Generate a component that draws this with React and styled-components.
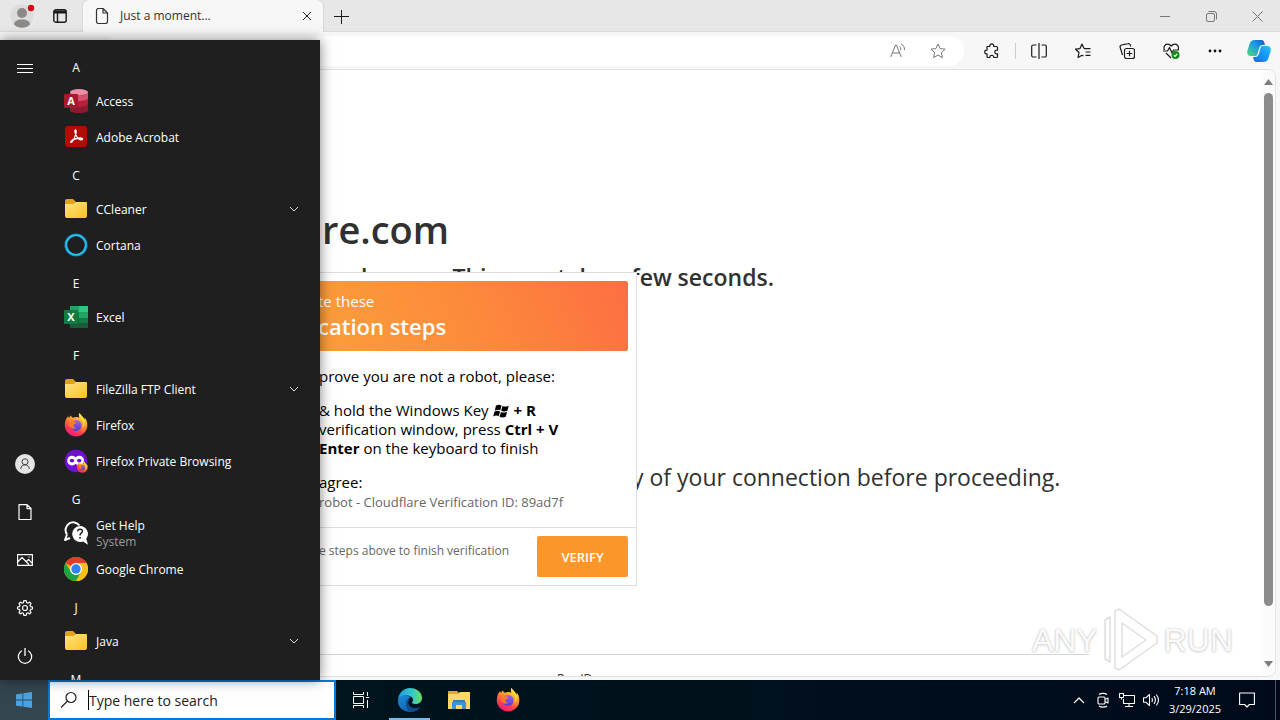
import React from "react";
import styled, { createGlobalStyle } from "styled-components";

const GlobalStyle = createGlobalStyle`
  *, *::before, *::after { box-sizing: border-box; }
  body { margin: 0; font-family: "Open Sans", "Noto Sans", sans-serif; font-size: 12px; color: #000; }
  h1, h2, p, ul, ol { margin: 0; padding: 0; font-weight: 400; }
  ul, ol { list-style: none; }
  button { border: 0; padding: 0; background: none; font: inherit; color: inherit; cursor: pointer; }
  input { border: 0; padding: 0; outline: 0; background: none; font: inherit; color: inherit; min-width: 0; }
  svg { display: block; flex: none; }
`;

/* ---------- shared ---------- */
const Desktop = styled.div`
  position: relative;
  display: flex;
  flex-direction: column;
  height: 100vh;
  overflow: hidden;
  background: #001520;
`;
const IconButton = styled.button`
  display: flex;
  flex: none;
  align-items: center;
  justify-content: center;
  width: ${(p) => p.$w || 44}px;
  height: ${(p) => p.$h || 30}px;
  color: ${(p) => p.$color || "#1a1a1a"};
`;
const Svg = ({ size = 20, w, h, box, stroke = "currentColor", sw = 1, children }) => (
  <svg
    width={w || size}
    height={h || size}
    viewBox={box || `0 0 ${w || size} ${h || size}`}
    fill="none"
    stroke={stroke}
    strokeWidth={sw}
    strokeLinejoin="round"
    aria-hidden="true"
  >
    {children}
  </svg>
);

/* ---------- browser ---------- */
const Browser = styled.section`
  display: flex;
  flex: 1;
  flex-direction: column;
  min-height: 0;
  background: #f7f7f7;
`;
const TabStrip = styled.header`
  display: flex;
  height: 32px;
  background: #e7e7e7;
  border-bottom: 1px solid #dcdcdc;
`;
const ProfileButton = styled(IconButton)`
  width: 44px;
  height: 32px;
`;
const Tab = styled.div`
  display: flex;
  align-items: center;
  width: 240px;
  height: 32px;
  margin-left: 7px;
  padding: 0 8px 1px 12px;
  background: #f7f7f7;
  border-radius: 6px 6px 0 0;
  box-shadow: 0 0 2px #bbb;
  color: #333;
`;
const TabTitle = styled.span`
  flex: 1;
  padding-left: 11px;
  font-size: 12px;
`;
const WindowControls = styled.div`
  display: flex;
  margin-left: auto;
`;
const Toolbar = styled.div`
  display: flex;
  align-items: center;
  height: 37px;
  padding-left: 104px;
  background: #f7f7f7;
`;
const AddressBar = styled.div`
  display: flex;
  flex: 1;
  align-items: center;
  height: 30px;
  padding-right: 6px;
  background: #fff;
  border-radius: 15px;
`;
const AddressInput = styled.input`
  flex: 1;
`;
const Tools = styled.div`
  display: flex;
  align-items: center;
  padding-left: 6px;
`;
const Separator = styled.i`
  width: 1px;
  height: 16px;
  margin: 0 1px;
  background: #ccc;
`;
const Viewport = styled.div`
  position: relative;
  display: flex;
  flex: 1;
  min-height: 0;
  margin: 0 4px 3px 0;
  overflow: hidden;
  background: #fff;
  border: 1px solid #e2e2e2;
  border-radius: 0 8px 8px 0;
`;
const Page = styled.main`
  flex: 1;
  min-width: 0;
  padding: 129px 173px 0 172px;
  overflow: hidden;
  color: #313131;
`;
const SiteName = styled.h1`
  padding-left: 149px;
  font-size: 38px;
  font-weight: 600;
  line-height: 60px;
`;
const Lead = styled.h2`
  padding-left: 188px;
  font-size: 23px;
  font-weight: 600;
  line-height: 36px;
  white-space: nowrap;
`;
const Explain = styled.p`
  padding: 164px 0 159px 459px;
  font-size: 23px;
  line-height: 36px;
  white-space: nowrap;
`;
const PageFooter = styled.footer`
  padding: 16px 0 0 384px;
  border-top: 1px solid #d5d5d5;
  font-size: 12px;
  line-height: 16px;
`;
const Scrollbar = styled.div`
  display: flex;
  flex-direction: column;
  align-items: center;
  width: 13px;
  padding: 9px 0;
  background: #fbfbfb;
`;
const Thumb = styled.div`
  flex: 1;
  width: 9px;
  margin: 8px 0 55px;
  background: #8b8b8b;
  border-radius: 5px;
`;

/* ---------- verification card ---------- */
const Card = styled.section`
  position: absolute;
  top: 202px;
  left: 290px;
  width: 346px;
  background: #fff;
  border: 1px solid #dedede;
  color: #000;
`;
const CardHeader = styled.header`
  margin: 8px 8px 0;
  padding: 9px 18px 11px;
  background: linear-gradient(68deg, #faa03a 0%, #fd8b3b 50%, #fc6f42 100%);
  border-radius: 2px;
  color: #fff;
`;
const CardKicker = styled.p`
  font-size: 15px;
  line-height: 22px;
`;
const CardTitle = styled.h2`
  font-size: 22px;
  font-weight: 600;
  line-height: 28px;
`;
const CardBody = styled.div`
  padding: 15px 0 14px 27px;
  font-size: 15px;
  line-height: 20px;
  white-space: nowrap;
`;
const Steps = styled.ol`
  padding: 15px 0 14px;
  line-height: 19px;
`;
const Step = styled.li`
  display: flex;
  align-items: center;
  gap: 4px;
`;
const Note = styled.p`
  padding-bottom: 1px;
  font-size: 13px;
  color: #666;
`;
const CardFooter = styled.footer`
  display: flex;
  justify-content: space-between;
  padding: 8px 8px 8px 27px;
  border-top: 1px solid #dedede;
  color: #666;
  font-size: 12px;
  line-height: 30px;
  white-space: nowrap;
`;
const VerifyButton = styled.button`
  width: 91px;
  height: 41px;
  background: #fb962a;
  border-radius: 2px;
  color: #fff;
  font-size: 13px;
  font-weight: 600;
`;

/* ---------- start menu ---------- */
const StartMenu = styled.nav`
  position: absolute;
  top: 40px;
  bottom: 40px;
  left: 0;
  display: flex;
  width: 320px;
  overflow: hidden;
  background: #1f1f1f;
  color: #fff;
`;
const MenuShadow = styled.div`
  position: absolute;
  top: 40px;
  bottom: 40px;
  left: 0;
  width: 320px;
  box-shadow: 0 0 12px rgba(0, 0, 0, 0.5);
`;
const Rail = styled.div`
  display: flex;
  flex-direction: column;
  width: 48px;
  padding: 5px 0 0 1px;
`;
const RailSpacer = styled.div`
  flex: 1;
`;
const AppList = styled.ul`
  flex: 1;
  padding-top: 8px;
`;
const Letter = styled.li`
  height: 36px;
  padding: 3px 0 0 16px;
  line-height: 34px;
`;
const LetterLabel = styled.span`
  display: block;
  width: 24px;
  text-align: center;
`;
const AppButton = styled.button`
  display: flex;
  align-items: center;
  gap: 8px;
  width: 100%;
  height: 36px;
  padding: 0 20px 2px 16px;
  font-size: 12px;
  line-height: 16px;
  text-align: left;
`;
const AppName = styled.span`
  flex: 1;
  padding-top: 2px;
`;
const AppSource = styled.small`
  display: block;
  color: #9b9b9b;
  font-size: 12px;
`;

/* ---------- taskbar ---------- */
const Taskbar = styled.footer`
  display: flex;
  flex: none;
  height: 40px;
  background: linear-gradient(90deg, #001820, #00101c 60%, #000a1a);
  color: #fff;
`;
const StartButton = styled(IconButton)`
  width: 48px;
  height: 40px;
  background: #33454e;
`;
const SearchBox = styled.label`
  display: flex;
  align-items: center;
  width: 288px;
  height: 40px;
  padding: 0 8px 0 10px;
  background: #fff;
  border: 2px solid #0078d7;
  color: #222;
`;
const Caret = styled.i`
  width: 1px;
  height: 20px;
  margin-left: 10px;
  background: #000;
`;
const SearchInput = styled.input`
  flex: 1;
  font-size: 14px;
  &::placeholder { color: #222; opacity: 1; }
`;
const TaskButton = styled(IconButton)`
  width: 49px;
  height: 40px;
  position: relative;
  color: #fff;
`;
const ActiveMark = styled.i`
  position: absolute;
  right: 4px;
  bottom: 0;
  left: 4px;
  height: 2px;
  background: #76b9ed;
`;
const Tray = styled.div`
  display: flex;
  align-items: center;
  margin-left: auto;
`;
const Clock = styled.time`
  width: 64px;
  font-size: 11px;
  line-height: 18px;
  text-align: center;
  white-space: nowrap;
`;
const PeekButton = styled.button`
  width: 5px;
  height: 40px;
  margin-left: 8px;
  border-left: 1px solid #4a545e;
`;

/* ---------- watermark ---------- */
const Watermark = styled.div`
  position: absolute;
  right: 47px;
  bottom: 48px;
  display: flex;
  align-items: center;
  gap: 4px;
  color: #fafafa;
  font-family: "Liberation Sans Narrow", "Liberation Sans", sans-serif;
  font-size: 32px;
  line-height: 60px;
  text-shadow: 0 0 2px #c4c4c4, 0 1px 3px #d4d4d4;
  pointer-events: none;
`;

/* ---------- app icons ---------- */
const OfficeTile = ({ letter, color }) => (
  <>
    <rect x="0" y="5" width="14" height="14" rx="1" fill={color} />
    <text x="7" y="16" textAnchor="middle" fontFamily="Open Sans" fontSize="11" fontWeight="700" fill="#fff" stroke="none">
      {letter}
    </text>
  </>
);
const AccessIcon = () => (
  <Svg size={24} stroke="none">
    <path d="M6 3v18c0 1.600 4 3 9 3s9-1.400 9-3V3z" fill="#b51f3c" />
    <path d="M6 15v6c0 1.600 4 3 9 3s9-1.400 9-3v-6c0 1.600-4 3-9 3s-9-1.400-9-3z" fill="#8b1a2f" />
    <path d="M6 3v6c0 1.600 4 3 9 3s9-1.400 9-3V3z" fill="#d6506c" />
    <ellipse cx="15" cy="3" rx="9" ry="3" fill="#ee8da5" />
    <OfficeTile letter="A" color="#a4192f" />
  </Svg>
);
const ExcelIcon = () => (
  <Svg size={24} stroke="none">
    <path d="M6 1h9v6H6z" fill="#21a366" /><path d="M15 1h9v6h-9z" fill="#33c481" />
    <path d="M6 7h9v6H6z" fill="#107c41" /><path d="M15 7h9v6h-9z" fill="#21a366" />
    <path d="M6 13h9v10H6z" fill="#185c37" /><path d="M15 13h9v5h-9z" fill="#107c41" /><path d="M15 18h9v5h-9z" fill="#185c37" />
    <OfficeTile letter="X" color="#107c41" />
  </Svg>
);
const AcrobatIcon = () => (
  <Svg size={24}>
    <rect x="1" y="1" width="22" height="21" rx="3" fill="#b30b00" stroke="none" />
    <path d="M11.500 5c-1.500 0 .2 5 1.500 7 1.300 2 3.500 3 5 2.600 1-.3.500-1.600-1.500-1.600-3.500 0-7 1.200-9 2.700-1.500 1.200-.8 2.300.3 1.300 1.700-1.700 3.700-6 4.200-8.800.3-1.700.3-3.200-.5-3.200z" stroke="#fff" strokeWidth="1.300" />
  </Svg>
);
const FolderIcon = () => (
  <Svg size={24} stroke="none">
    <defs><linearGradient id="folder" x1="0" y1="0" x2="1" y2="1"><stop stopColor="#ffe38a" /><stop offset="1" stopColor="#fcc21b" /></linearGradient></defs>
    <path d="M1 4a2 2 0 0 1 2-2h6l3 3v4H1z" fill="#dfa21b" />
    <path d="M1 7h9l2-2h10a1 1 0 0 1 1 1v13a2 2 0 0 1-2 2H3a2 2 0 0 1-2-2z" fill="url(#folder)" />
  </Svg>
);
const CortanaIcon = () => (
  <Svg size={24}>
    <circle cx="12" cy="12" r="10.300" stroke="#1579b8" strokeWidth="2.600" />
    <circle cx="12" cy="12" r="9.800" stroke="#27c4ea" strokeWidth="1.800" />
  </Svg>
);
const FirefoxShape = () => (
  <>
    <defs>
      <linearGradient id="fox" x1=".8" y1="0" x2=".3" y2="1"><stop stopColor="#fff14a" /><stop offset=".4" stopColor="#ff9a2c" /><stop offset=".75" stopColor="#ff3a4e" /><stop offset="1" stopColor="#e01a88" /></linearGradient>
      <linearGradient id="globe" x1="0" y1="0" x2="0" y2="1"><stop stopColor="#a35cf0" /><stop offset="1" stopColor="#5345c8" /></linearGradient>
    </defs>
    <path d="M15.500 0c-1 2-.8 3.300.3 4.600C14 3.800 11 3.600 9 4.700 7.500 4 7 3 7 2.500 6 3 5.500 4 5.400 4.800 4.700 4.600 4.300 4 4 3.200 2 5 .8 8.500.8 12A11.200 11.200 0 0 0 12 23.500 11.300 11.300 0 0 0 23.300 12c0-3-1-5.500-2.600-7.400.1 1 0 1.600-.3 2C19.600 3.800 17 2.700 15.500 0z" fill="url(#fox)" />
    <circle cx="12" cy="12.500" r="5.500" fill="url(#globe)" />
    <path d="M5 8c2-1 4-.5 5 .3 1 .6 2 .7 2.500 1.200-.4 1.200-2.500 1.300-3 2.500-.3 1.200.5 2.500 2.500 2.800-2.500 2-6 .2-7-2.800z" fill="#ff7a30" />
    <path d="M15.500 0c-1 2-.8 3.300.8 5.200 2.700 2.500 4 6 1.700 10.300 3-2 3.600-7 1.300-10.500C18 3.200 16.500 2 15.500 0z" fill="#ffdc3e" />
  </>
);
const FirefoxIcon = () => <Svg size={24} stroke="none"><FirefoxShape /></Svg>;
const FirefoxPrivateIcon = () => (
  <Svg size={24} stroke="none">
    <circle cx="12" cy="12" r="11.300" fill="#7010d4" />
    <rect x="3.200" y="6.800" width="9.600" height="9.600" rx="4.600" fill="#fff" />
    <rect x="10.400" y="6.800" width="9.600" height="9.600" rx="4.600" fill="#fff" />
    <ellipse cx="8" cy="11.600" rx="2.200" ry="1.900" fill="#6d0bc9" />
    <ellipse cx="15.200" cy="11.600" rx="2.200" ry="1.900" fill="#6d0bc9" />
    <g transform="translate(12.500 12.500) scale(.48)"><FirefoxShape /></g>
  </Svg>
);
const HelpIcon = () => (
  <Svg size={24}>
    <path d="M3 13.500A7.500 7.500 0 1 1 15.500 4.500M3 13.500 1 19l5-2" stroke="#fff" strokeWidth="2" />
    <path d="M16 5a8 8 0 1 0 3 15.500l5 3.300-1.700-6A8 8 0 0 0 16 5z" fill="#fff" stroke="none" />
    <path d="M13.700 10.300c.2-3 5-2.800 4.700.2-.2 1.800-2.400 1.700-2.400 4M16 16v1.700" stroke="#1f1f1f" strokeWidth="1.500" />
  </Svg>
);
const ChromeIcon = () => (
  <Svg size={24} stroke="none">
    <circle cx="12" cy="12" r="12" fill="#fbbc04" />
    <path d="M1.600 6A12 12 0 0 1 22.400 6H12v6z" fill="#e33b2e" />
    <path d="M1.600 6A12 12 0 0 0 12 24l5.200-9L6.800 15z" fill="#1ea446" />
    <path d="M22.400 6A12 12 0 0 1 12 24l5.200-9V6z" fill="#fbc116" />
    <circle cx="12" cy="12" r="6" fill="#fff" />
    <circle cx="12" cy="12" r="4.700" fill="#3080ee" />
  </Svg>
);
const Chevron = () => <Svg size={12} stroke="#ddd"><path d="M2 4l4 4 4-4" /></Svg>;

const EdgeIcon = () => (
  <Svg size={24} stroke="none">
    <defs>
      <linearGradient id="edgeA" x1="0" y1=".3" x2="1" y2=".3"><stop stopColor="#1a9de0" /><stop offset=".6" stopColor="#35c8c6" /><stop offset="1" stopColor="#6be35c" /></linearGradient>
      <linearGradient id="edgeB" x1="0" y1="0" x2="1" y2="1"><stop stopColor="#1c8edb" /><stop offset="1" stopColor="#0c4f9f" /></linearGradient>
    </defs>
    <path d="M0 12C.5 5 5.500 0 12 0c7 0 12 4.500 12 10 0 3.500-2.700 6-6 6-2.600 0-4.300-.8-4-1.800.8-.8 1-1.500 1-2.500 0-2.400-3-4.200-6.500-4.200C4 7.500 1 9.500 0 12z" fill="url(#edgeA)" />
    <path d="M0 12c1-3.500 4.500-5.200 8.500-4.500 2 .3 3.500 1 4.500 2-4 0-5 8 .5 10.500 3 1.300 6 .6 8.700-1C20 22 16.500 24 12.500 24 5 24-.5 19 0 12z" fill="url(#edgeB)" />
    <path d="M8 15c-.5 4.500 2 8 6 8.800 3.300-.4 6.500-2.300 8.200-4.800-3.200 1.600-6.700 1.800-9.200.1C10 17.200 9.600 13 12 10c-2.200.5-3.700 2.500-4 5z" fill="#114a8b" />
  </Svg>
);
const ExplorerIcon = () => (
  <Svg size={24} stroke="none">
    <path d="M1 3h9l2 2v5H1z" fill="#e9a62a" />
    <path d="M1 6h10l2-2h10v17H1z" fill="#ffd766" />
    <path d="M5 14h14v7h-4v-4H9v4H5z" fill="#3e94cf" />
    <path d="M6 12h12v2H6z" fill="#2f7fba" />
  </Svg>
);
const WindowsLogo = () => (
  <Svg size={16} stroke="none">
    <path fill="#4aa3e0" d="M0 2.300l6.500-.9v6.200H0zM7.300 1.300L16 0v7.600H7.300zM0 8.400h6.500v6.200L0 13.700zM7.300 8.400H16V16l-8.700-1.300z" />
  </Svg>
);
const WindowsKey = () => (
  <Svg w={17} h={14} stroke="none">
    <path fill="#000" d="M3 1.500C5 .4 7 .5 8.500 1.400L7.300 6.300C5.600 5.400 4 5.400 1.800 6.400zM9.400 1.900c1.700 1 3.800.9 6.300-.2l-1.300 5c-2.400 1.100-4.500 1-6.200.1zM1.500 7.400c2-1 4-1 5.500 0L5.800 12.200C4.200 11.300 2.400 11.300.2 12.400zM7.900 7.900c1.700.9 3.800.9 6.200-.2l-1.300 5c-2.300 1-4.400 1-6.200.1z" />
  </Svg>
);
const FileIcon = () => <Svg w={14} h={16} sw={1.2}><path d="M1.500 2.500a2 2 0 0 1 2-2H8L12.500 5v8.500a2 2 0 0 1-2 2h-7a2 2 0 0 1-2-2zM8 .5V5h4.500" /></Svg>;
const CopilotIcon = () => (
  <Svg size={24} stroke="none">
    <defs>
      <linearGradient id="copA" x1="1" y1="0" x2="0" y2="1"><stop stopColor="#1557c0" /><stop offset=".45" stopColor="#1b9ee5" /><stop offset="1" stopColor="#55d86b" /></linearGradient>
      <linearGradient id="copB" x1="0" y1="1" x2="1" y2="0"><stop stopColor="#0b6fe0" /><stop offset=".6" stopColor="#1a9bff" /><stop offset="1" stopColor="#2cc4ee" /></linearGradient>
    </defs>
    <path d="M8 1h6.500c2 0 2.500 1.500 3 3.300l.5 1.700h-2.500c-1.800 0-2.700 1-3.300 3L10.500 15c-.6 1.700-1.500 2-3 2H3.500C.5 17-.3 14.500.5 11.500l2-6.500C3.300 2.500 5 1 8 1z" fill="url(#copA)" />
    <path d="M16 23H9.500c-2 0-2.500-1.500-3-3.300L6 18h2.500c1.800 0 2.700-1 3.300-3l1.700-6c.6-1.700 1.500-2 3-2h4c3 0 3.800 2.500 3 5.500l-2 6.500c-.8 2.500-2.500 4-5.500 4z" fill="url(#copB)" />
  </Svg>
);

const APPS = [
  { letter: "A" },
  { name: "Access", icon: AccessIcon },
  { name: "Adobe Acrobat", icon: AcrobatIcon },
  { letter: "C" },
  { name: "CCleaner", icon: FolderIcon, folder: true },
  { name: "Cortana", icon: CortanaIcon },
  { letter: "E" },
  { name: "Excel", icon: ExcelIcon },
  { letter: "F" },
  { name: "FileZilla FTP Client", icon: FolderIcon, folder: true },
  { name: "Firefox", icon: FirefoxIcon },
  { name: "Firefox Private Browsing", icon: FirefoxPrivateIcon },
  { letter: "G" },
  { name: "Get Help", icon: HelpIcon, source: "System" },
  { name: "Google Chrome", icon: ChromeIcon },
  { letter: "J" },
  { name: "Java", icon: FolderIcon, folder: true },
  { letter: "M" },
];

function BrowserTabs() {
  return (
    <TabStrip>
      <ProfileButton aria-label="Profile">
        <Svg w={28} h={28} stroke="none">
          <circle cx="14" cy="14" r="11.500" fill="#dcdcdc" />
          <circle cx="14" cy="11" r="5" fill="#8c8987" />
          <path d="M6 22.500c0-3 3-5 8-5s8 2 8 5a11.500 11.500 0 0 1-16 0z" fill="#8c8987" />
          <circle cx="23" cy="6" r="3.200" fill="#d40b12" />
        </Svg>
      </ProfileButton>
      <IconButton $w={32} $h={32} aria-label="Tab actions">
        <Svg size={14} sw={1.4}><rect x=".8" y=".8" width="12.400" height="12.400" rx="2" /><path d="M1 3h12" strokeWidth="3" /><path d="M4.500 3v10" /></Svg>
      </IconButton>
      <Tab>
        <FileIcon />
        <TabTitle>Just a moment...</TabTitle>
        <IconButton $w={16} $h={16} aria-label="Close tab"><Svg size={10}><path d="M1 1l8 8M9 1L1 9" /></Svg></IconButton>
      </Tab>
      <IconButton $w={36} $h={32} aria-label="New tab"><Svg size={15}><path d="M7.500 1v14M0 7.500h15" /></Svg></IconButton>
      <WindowControls>
        <IconButton $w={46} $h={32} $color="#777" aria-label="Minimize"><Svg size={10}><path d="M0 5.500h10" /></Svg></IconButton>
        <IconButton $w={46} $h={32} $color="#777" aria-label="Restore"><Svg size={11}><rect x=".5" y="2.500" width="8" height="8" rx="1.500" /><path d="M2.500.5H8A2.500 2.500 0 0 1 10.500 3v5.500" /></Svg></IconButton>
        <IconButton $w={46} $h={32} $color="#777" aria-label="Close"><Svg size={11}><path d="M.5.5l10 10M10.500.5l-10 10" /></Svg></IconButton>
      </WindowControls>
    </TabStrip>
  );
}

const STAR = "M8 1l2.100 4.600 5 .6-3.700 3.400 1 5L8 12.100l-4.400 2.500 1-5L.9 6.200l5-.6z";

function BrowserToolbar() {
  return (
    <Toolbar>
      <AddressBar>
        <AddressInput aria-label="Address" />
        <IconButton $w={40} $color="#777" aria-label="Read aloud">
          <Svg size={16}><path d="M.7 14L5.600 2h.8l4.900 12M2.500 10h7M9.500 3.500c1 .8 1.400 2 1.300 3.500M11 .8c2.500 1.400 3.600 3.500 3.500 6.200" /></Svg>
        </IconButton>
        <IconButton $w={40} $color="#777" aria-label="Add to favorites"><Svg size={16}><path d={STAR} /></Svg></IconButton>
      </AddressBar>
      <Tools>
        <IconButton aria-label="Extensions">
          <Svg size={16} sw={1.2}><path d="M3 3.500h2.800C5.500 1.800 6.500.8 7.800.8s2.200 1 2 2.700h2.700a1 1 0 0 1 1 1v2.700c-1.700-.2-2.700.6-2.700 1.800s1 2 2.700 1.800v2.700a1 1 0 0 1-1 1H9.800c.2-1.500-.8-2.200-2-2.200s-2.200.7-2 2.200H4a1 1 0 0 1-1-1V10.800C1.500 11 .7 10.200.7 9S1.500 7 3 7.200z" /></Svg>
        </IconButton>
        <Separator />
        <IconButton aria-label="Split screen"><Svg w={16} h={16} sw={1.2}><path d="M8 0v16M5.500 2H2.200A1.500 1.500 0 0 0 .7 3.500v9A1.500 1.500 0 0 0 2.200 14h3.300M10.500 2h3.300a1.500 1.500 0 0 1 1.500 1.500v9a1.500 1.500 0 0 1-1.500 1.500h-3.300" /></Svg></IconButton>
        <IconButton aria-label="Favorites"><Svg size={16} sw={1.2}><path d="M9 5.600h6.500M10.500 9h5M10.500 12.300h5M9 5.600L7 1 5 5.600l-4.500.6L4 9.500l-1 5 4-2.300M7 12.200l1.500.8" /></Svg></IconButton>
        <IconButton aria-label="Collections"><Svg size={16} sw={1.2}><rect x="5.500" y="5.500" width="10" height="10" rx="2" /><path d="M10.500 7.700v5.600M7.700 10.500h5.600M3.500 12L1.200 4.500A2 2 0 0 1 2.500 2L9 .7a2 2 0 0 1 2.400 1.500l.3 1.300" /></Svg></IconButton>
        <IconButton aria-label="Browser essentials">
          <Svg w={17} h={16} sw={1.2}><path d="M1.500 7C.2 4.200 1.700 1.200 4.500 1.200c1.800 0 3 1 3.700 2 .7-1 2-2 3.800-2 2.800 0 4.300 3 3 5.800M0 8h4.500l2-3.500L9 10l1.500-3H16M3 10l5 5" /><circle cx="12.500" cy="12" r="4" fill="#138a1c" stroke="none" /><path d="M10.800 12.200l1.200 1.200 2.300-2.500" stroke="#fff" /></Svg>
        </IconButton>
        <IconButton aria-label="More"><Svg w={14} h={4} stroke="none"><g fill="#111"><circle cx="2" cy="2" r="1.400" /><circle cx="7" cy="2" r="1.400" /><circle cx="12" cy="2" r="1.400" /></g></Svg></IconButton>
        <IconButton $w={43} aria-label="Copilot"><CopilotIcon /></IconButton>
      </Tools>
    </Toolbar>
  );
}

function VerificationCard() {
  return (
    <Card>
      <CardHeader>
        <CardKicker>te these</CardKicker>
        <CardTitle>cation steps</CardTitle>
      </CardHeader>
      <CardBody>
        <p>prove you are not a robot, please:</p>
        <Steps>
          <Step><span>&amp; hold the Windows Key</span><WindowsKey /><b>+ R</b></Step>
          <Step><span>verification window, press</span><b>Ctrl + V</b></Step>
          <Step><b>Enter</b><span>on the keyboard to finish</span></Step>
        </Steps>
        <p>agree:</p>
        <Note>robot - Cloudflare Verification ID: 89ad7f</Note>
      </CardBody>
      <CardFooter>
        <span>e steps above to finish verification</span>
        <VerifyButton>VERIFY</VerifyButton>
      </CardFooter>
    </Card>
  );
}

function StartPanel() {
  return (
    <StartMenu aria-label="Start">
      <Rail>
        <IconButton $w={48} $h={48} $color="#fff" aria-label="Expand"><Svg w={16} h={10}><path d="M0 .5h16M0 4.500h16M0 8.500h16" /></Svg></IconButton>
        <RailSpacer />
        <IconButton $w={48} $h={48} $color="#fff" aria-label="Account"><Svg size={20}><circle cx="10" cy="10" r="10" fill="#e4e4e4" stroke="none" /><circle cx="10" cy="7.800" r="3" stroke="#444" /><path d="M5.700 15c0-5.500 8.600-5.500 8.600 0" stroke="#444" /></Svg></IconButton>
        <IconButton $w={48} $h={48} $color="#fff" aria-label="Documents"><Svg w={14} h={16} sw={1.2}><path d="M1 .6h8L13 4.500v11H1zM9 .6v4h4" /></Svg></IconButton>
        <IconButton $w={48} $h={48} $color="#fff" aria-label="Pictures"><Svg w={16} h={12} sw={1.2}><path d="M.6.6h14.800v10.800H.6zM.6 8L5 3.500l7 7M9 8l2.500-2.500 4 4M11.500 3h1.200" /></Svg></IconButton>
        <IconButton $w={48} $h={48} $color="#fff" aria-label="Settings">
          <Svg size={16} sw={1.2}><circle cx="8" cy="8" r="2.500" /><path d="M6.800.7h2.400l.4 2 1.300.5 1.700-1.100 1.400 1.400-1 1.700.5 1.400 2 .4v2l-2 .4-.5 1.400 1 1.700-1.400 1.400-1.700-1.100-1.300.5-.4 2H6.800l-.4-2-1.300-.5-1.700 1.100L2 12.500l1-1.700-.5-1.400-2-.4V7l2-.4L3 5.200 2 3.500l1.400-1.400 1.700 1.100 1.300-.5z" /></Svg>
        </IconButton>
        <IconButton $w={48} $h={48} $color="#fff" aria-label="Power"><Svg size={16} sw={1.3}><path d="M8 0v8M4.800 2.700a6.700 6.700 0 1 0 6.400 0" /></Svg></IconButton>
      </Rail>
      <AppList>
        {APPS.map(({ letter, name, icon: Icon, folder, source }) =>
          letter ? (
            <Letter key={letter}><LetterLabel>{letter}</LetterLabel></Letter>
          ) : (
            <li key={name}>
              <AppButton>
                <Icon />
                <AppName>{name}{source && <AppSource>{source}</AppSource>}</AppName>
                {folder && <Chevron />}
              </AppButton>
            </li>
          )
        )}
      </AppList>
    </StartMenu>
  );
}

export default function App() {
  return (
    <Desktop>
      <GlobalStyle />
      <Browser>
        <BrowserTabs />
        <BrowserToolbar />
        <Viewport>
          <Page>
            <SiteName>re.com</SiteName>
            <Lead>human. This may take a few seconds.</Lead>
            <Explain>y of your connection before proceeding.</Explain>
            <PageFooter>Ray ID:</PageFooter>
          </Page>
          <Scrollbar aria-hidden="true">
            <Svg w={9} h={6} stroke="none"><path d="M0 6l4.500-6L9 6z" fill="#7d7d7d" /></Svg>
            <Thumb />
            <Svg w={9} h={6} stroke="none"><path d="M0 0l4.500 6L9 0z" fill="#7d7d7d" /></Svg>
          </Scrollbar>
          <VerificationCard />
        </Viewport>
      </Browser>
      <MenuShadow />
      <StartPanel />
      <Watermark>
        <span>ANY</span>
        <Svg w={58} h={64} stroke="#dedede" sw={1.5}>
          <path fillRule="evenodd" d="M13 3l4-2 38 27v7L17 62l-4-2zM20 15v34l24-17z" fill="#fff" />
          <path d="M3 12l5-3v45l-5-3z" fill="#fff" />
        </Svg>
        <span>RUN</span>
      </Watermark>
      <Taskbar>
        <StartButton aria-label="Start"><WindowsLogo /></StartButton>
        <SearchBox>
          <Svg size={18} sw={1.2} stroke="#222"><circle cx="11" cy="6.500" r="5" /><path d="M7.500 10L1 16.500" /></Svg>
          <Caret />
          <SearchInput aria-label="Search" placeholder="Type here to search" />
        </SearchBox>
        <TaskButton aria-label="Task view"><Svg w={16} h={16}><path d="M.5 0v2.500h10V0M.5 16v-2.500h10V16M.5 4.500h10v7H.5zM14.500 0v4M14.500 8v8M13 5.500h3" /></Svg></TaskButton>
        <TaskButton aria-label="Microsoft Edge"><EdgeIcon /><ActiveMark /></TaskButton>
        <TaskButton aria-label="File Explorer"><ExplorerIcon /></TaskButton>
        <TaskButton aria-label="Firefox"><FirefoxIcon /></TaskButton>
        <Tray>
          <IconButton $w={24} $h={40} $color="#fff" aria-label="Hidden icons"><Svg w={12} h={8} sw={1.2}><path d="M1 7l5-5 5 5" /></Svg></IconButton>
          <IconButton $w={24} $h={40} $color="#fff" aria-label="Meet now"><Svg size={16} sw={1.1}><rect x="3" y="5" width="7" height="7" rx="1" /><path d="M10 7.500l3-1.500v5l-3-1.500M4 2.500c2-1.500 6-1.500 8 0M4 14c2 1.500 6 1.500 8 0" /></Svg></IconButton>
          <IconButton $w={24} $h={40} $color="#fff" aria-label="Network"><Svg size={16} sw={1.1}><path d="M5 3.500h10.500v8H4.500V7M10 11.500v3M6 14.500h8M.5 1.500h4v4h-4zM2.500 5.500v2" /></Svg></IconButton>
          <IconButton $w={24} $h={40} $color="#fff" aria-label="Volume"><Svg w={17} h={14} sw={1.1}><path d="M.5 4.800h2.300L6.500 1.500v11L2.800 9.200H.5zM8.800 5c.8 1.300.8 2.700 0 4M11 3.200c1.800 2.400 1.800 5.200 0 7.600M13.300 1.500c2.800 3.500 2.800 7.500 0 11" /></Svg></IconButton>
          <Clock>7:18 AM<br />3/29/2025</Clock>
          <IconButton $w={40} $h={40} $color="#fff" aria-label="Notifications"><Svg size={16} sw={1.1}><path d="M.6 1h14.800v11.500h-5L8 15l-2.400-2.500h-5z" /></Svg></IconButton>
          <PeekButton aria-label="Show desktop" />
        </Tray>
      </Taskbar>
    </Desktop>
  );
}
